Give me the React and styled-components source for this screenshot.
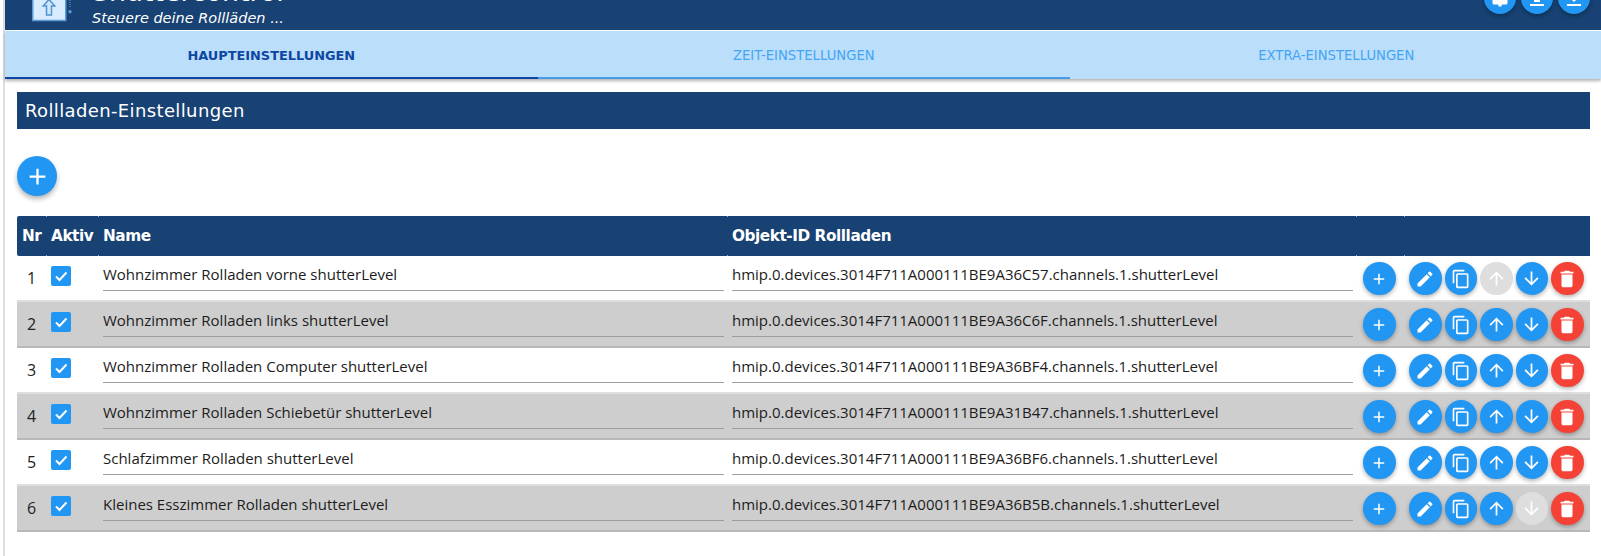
import React from 'react'
import styled, { createGlobalStyle } from 'styled-components'

const rows = [
  { name: 'Wohnzimmer Rolladen vorne shutterLevel', id: 'hmip.0.devices.3014F711A000111BE9A36C57.channels.1.shutterLevel' },
  { name: 'Wohnzimmer Rolladen links shutterLevel', id: 'hmip.0.devices.3014F711A000111BE9A36C6F.channels.1.shutterLevel' },
  { name: 'Wohnzimmer Rolladen Computer shutterLevel', id: 'hmip.0.devices.3014F711A000111BE9A36BF4.channels.1.shutterLevel' },
  { name: 'Wohnzimmer Rolladen Schiebetür shutterLevel', id: 'hmip.0.devices.3014F711A000111BE9A31B47.channels.1.shutterLevel' },
  { name: 'Schlafzimmer Rolladen shutterLevel', id: 'hmip.0.devices.3014F711A000111BE9A36BF6.channels.1.shutterLevel' },
  { name: 'Kleines Esszimmer Rolladen shutterLevel', id: 'hmip.0.devices.3014F711A000111BE9A36B5B.channels.1.shutterLevel' },
]

const icons = {
  add: 'M19 13h-6v6h-2v-6H5v-2h6V5h2v6h6v2z',
  edit: 'M3 17.25V21h3.75L17.81 9.94l-3.75-3.75L3 17.25zM20.71 7.04a1 1 0 0 0 0-1.41l-2.34-2.34a1 1 0 0 0-1.41 0l-1.83 1.83 3.75 3.75 1.83-1.83z',
  copy: 'M16 1H4c-1.1 0-2 .9-2 2v14h2V3h12V1zm3 4H8c-1.1 0-2 .9-2 2v14c0 1.1.9 2 2 2h11c1.1 0 2-.9 2-2V7c0-1.1-.9-2-2-2zm0 16H8V7h11v14z',
  up: 'M4 12l1.41 1.41L11 7.83V20h2V7.83l5.58 5.59L20 12l-8-8-8 8z',
  down: 'M20 12l-1.41-1.41L13 16.17V4h-2v12.17l-5.58-5.59L4 12l8 8 8-8z',
  trash: 'M6 19c0 1.1.9 2 2 2h8c1.1 0 2-.9 2-2V7H6v12zM19 4h-3.5l-1-1h-5l-1 1H5v2h14V4z',
  help: 'M6 2h12a1.500 1.500 0 0 1 1.500 1.500v13.500a1.500 1.500 0 0 1-1.500 1.500h-4l-.7 2h-2.600l-.7-2H6a1.500 1.500 0 0 1-1.500-1.500V3.500A1.500 1.500 0 0 1 6 2z',
  upload: 'M5 18h14v2H5v-2zM9 16h6v-6h4l-7-7-7 7h4v6z',
  download: 'M19 9h-4V3H9v6H5l7 7 7-7zM5 18v2h14v-2H5z',
}

const Icon = ({ d, size = 24 }) => (
  <svg width={size} height={size} viewBox="0 0 24 24" fill="currentColor"><path d={d} /></svg>
)

const App = () => (
  <>
    <GlobalStyle />
    <Page>
      <Main>
        <Header>
          <Logo>
            <svg width="40" height="32" viewBox="0 0 40 32">
              <rect x="0.750" y="-10" width="33" height="32.500" fill="#d9ecff" stroke="#5b9bd5" strokeWidth="1.500" />
              <path d="M17 1.500l5.800 6.500h-3.300v9h-5V8h-3.300z" fill="#cfe6fb" stroke="#4f93d2" strokeWidth="1.500" />
              <circle cx="38" cy="13.700" r="1.700" fill="#5b9bd5" />
              <path d="M38 0v10" stroke="#5b9bd5" strokeDasharray="1 1" />
            </svg>
          </Logo>
          <Titles>
            <AppTitle>Shuttercontrol</AppTitle>
            <SubTitle>Steuere deine Rollläden ...</SubTitle>
          </Titles>
          <HeaderButtons>
            <HeaderButton><Icon d={icons.help} /></HeaderButton>
            <HeaderButton><Icon d={icons.upload} /></HeaderButton>
            <HeaderButton><Icon d={icons.download} /></HeaderButton>
          </HeaderButtons>
        </Header>
        <Tabs>
          <Tab active>HAUPTEINSTELLUNGEN</Tab>
          <Tab underlined>ZEIT-EINSTELLUNGEN</Tab>
          <Tab>EXTRA-EINSTELLUNGEN</Tab>
        </Tabs>
        <Content>
          <SectionTitle>Rollladen-Einstellungen</SectionTitle>
          <AddButton><Icon d={icons.add} size={27} /></AddButton>
          <Table>
            <HeadRow>
              <HeadCell>Nr</HeadCell>
              <HeadCell>Aktiv</HeadCell>
              <HeadCell>Name</HeadCell>
              <HeadCell>Objekt-ID Rollladen</HeadCell>
              <HeadCell />
              <HeadCell />
            </HeadRow>
            {rows.map((row, i) => (
              <Row key={row.id} odd={i % 2 === 1}>
                <Nr>{i + 1}</Nr>
                <CheckCell>
                  <Check>
                    <svg width="20" height="20" viewBox="0 0 20 20">
                      <path d="M5 10.500l3.500 3.500L15.500 6.500" fill="none" stroke="#fff" strokeWidth="2" />
                    </svg>
                  </Check>
                </CheckCell>
                <FieldCell><Field>{row.name}</Field></FieldCell>
                <FieldCell><Field>{row.id}</Field></FieldCell>
                <ActionCell>
                  <RoundButton><Icon d={icons.add} size={18} /></RoundButton>
                </ActionCell>
                <ActionsCell>
                  <RoundButton><Icon d={icons.edit} size={20} /></RoundButton>
                  <RoundButton><Icon d={icons.copy} size={20} /></RoundButton>
                  <RoundButton disabled={i === 0}><Icon d={icons.up} size={21} /></RoundButton>
                  <RoundButton disabled={i === rows.length - 1}><Icon d={icons.down} size={21} /></RoundButton>
                  <RoundButton danger><Icon d={icons.trash} size={22} /></RoundButton>
                </ActionsCell>
              </Row>
            ))}
          </Table>
        </Content>
      </Main>
    </Page>
  </>
)

const GlobalStyle = createGlobalStyle`
  html, body {
    margin: 0;
    padding: 0;
    background: #fff;
    overflow: hidden;
  }
  * {
    box-sizing: border-box;
  }
`

const Page = styled.div`
  width: 1601px;
  height: 556px;
  overflow: hidden;
  padding-left: 3px;
  font-family: "Open Sans", "Noto Sans", sans-serif;
`

const Main = styled.div`
  height: 100%;
  border-left: 2px solid #dedede;
`

const Header = styled.div`
  height: 30px;
  background: #174273;
  display: flex;
  align-items: flex-end;
  overflow: hidden;
  padding-left: 27px;
`

const Logo = styled.div`
  width: 60px;
  height: 32px;
  flex: none;
`

const Titles = styled.div`
  display: flex;
  flex-direction: column;
  margin-bottom: 3px;
`

const AppTitle = styled.div`
  font-family: "DejaVu Sans", sans-serif;
  font-size: 26.800px;
  line-height: 22px;
  color: #fff;
  height: 28px;
  margin-top: -30px;
`

const SubTitle = styled.div`
  font-family: "DejaVu Sans", sans-serif;
  font-style: italic;
  font-size: 14.500px;
  line-height: 18px;
  color: #fff;
`

const HeaderButtons = styled.div`
  display: flex;
  gap: 5px;
  margin-left: auto;
  padding-right: 11px;
  padding-bottom: 16px;
`

const HeaderButton = styled.button`
  width: 32px;
  height: 32px;
  border: 0;
  padding: 0;
  border-radius: 50%;
  background: #2196f3;
  color: #fff;
  display: flex;
  align-items: center;
  justify-content: center;
  box-shadow: 0 2px 4px rgba(0, 0, 0, 0.3);
`

const Tabs = styled.div`
  margin-top: 1px;
  height: 48px;
  background: #bbdefb;
  display: flex;
  overflow: hidden;
  box-shadow: 0 2px 3px rgba(0, 0, 0, 0.3);
`

const Tab = styled.div`
  flex: 0 0 532.500px;
  display: flex;
  align-items: center;
  justify-content: center;
  padding-top: 2px;
  font-family: "DejaVu Sans", sans-serif;
  font-size: ${props => (props.active ? '12.900px' : '13.200px')};
  font-weight: ${props => (props.active ? 600 : 400)};
  color: ${props => (props.active ? '#0d47a1' : '#42a5f5')};
  border-bottom: 2px solid ${props => (props.active ? '#0d47a1' : props.underlined ? '#479be6' : 'transparent')};
`

const Content = styled.div`
  padding: 13px 11px 0 12px;
`

const SectionTitle = styled.div`
  height: 37px;
  background: #174273;
  color: #fff;
  font-family: "DejaVu Sans", sans-serif;
  font-size: 18px;
  letter-spacing: 0.37px;
  line-height: 37px;
  padding-left: 8px;
`

const AddButton = styled.button`
  display: flex;
  align-items: center;
  justify-content: center;
  width: 40px;
  height: 40px;
  margin: 27px 0 20px;
  border: 0;
  padding: 0;
  border-radius: 50%;
  background: #2196f3;
  color: #fff;
  box-shadow: 0 3px 5px rgba(0, 0, 0, 0.3);
`

const Table = styled.div`
  display: grid;
  grid-template-columns: 30px 52px 629px 629px 48px 1fr;
`

const HeadRow = styled.div`
  display: contents;
`

const HeadCell = styled.div`
  height: 40px;
  background: #174273;
  color: #fff;
  font-family: "DejaVu Sans", sans-serif;
  font-weight: 700;
  font-size: 15.300px;
  letter-spacing: -0.45px;
  line-height: 40px;
  padding-left: 4px;
  position: relative;
  &:first-child {
    border-radius: 2px 0 0 2px;
    padding-left: 5px;
  }
  &:not(:first-child)::before {
    content: '';
    position: absolute;
    left: -1px;
    top: 0;
    height: 1px;
    width: 1px;
    background: #9fb3c8;
    box-shadow: 0 39px 0 #9fb3c8;
  }
`

const Row = styled.div`
  display: contents;
  & > div {
    height: 46px;
    background: ${props => (props.odd ? '#cecece' : '#fff')};
    border-bottom: 2px solid ${props => (props.odd ? '#b8b8b8' : '#dedede')};
  }
`

const Nr = styled.div`
  font-size: 16px;
  color: #222;
  line-height: 44px;
  padding-left: 10px;
`

const CheckCell = styled.div`
  padding: 10px 0 0 4px;
`

const Check = styled.div`
  width: 20px;
  height: 20px;
  border-radius: 2px;
  background: #2196f3;
`

const FieldCell = styled.div`
  padding: 0 4px;
`

const Field = styled.div`
  height: 33px;
  margin-top: 2px;
  font-size: 15px;
  line-height: 32px;
  color: #1c1c1c;
  border-bottom: 1px solid #9e9e9e;
  white-space: nowrap;
`

const ActionCell = styled.div`
  padding: 6px 0 0 6px;
`

const ActionsCell = styled.div`
  display: flex;
  gap: 3px;
  padding: 6px 0 0 4px;
`

const RoundButton = styled.button`
  flex: none;
  display: flex;
  align-items: center;
  justify-content: center;
  width: 32.500px;
  height: 33px;
  border: 0;
  padding: 0;
  border-radius: 50%;
  color: #fff;
  background: ${props => (props.disabled ? '#dedede' : props.danger ? '#f44336' : '#2196f3')};
  box-shadow: ${props => (props.disabled ? 'none' : '0 2px 4px rgba(0, 0, 0, 0.3)')};
`

export default App
